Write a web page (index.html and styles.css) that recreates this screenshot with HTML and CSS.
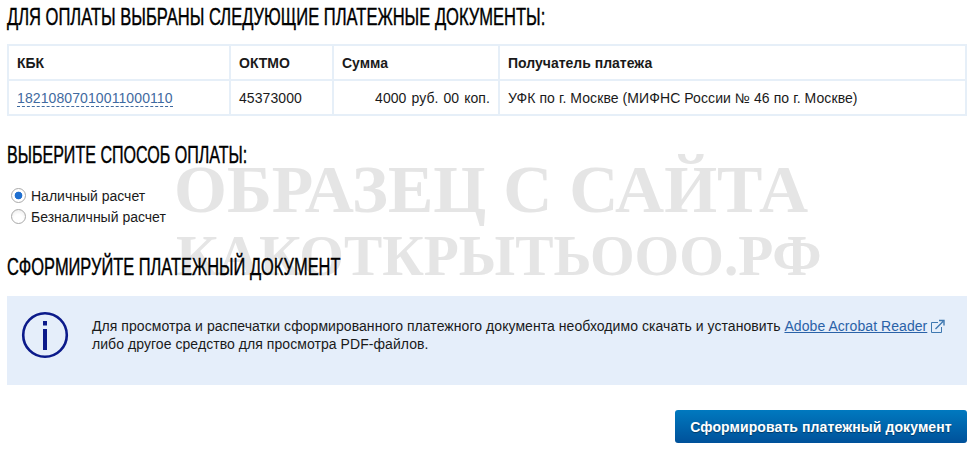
FILE: index.html
```html
<!DOCTYPE html>
<html lang="en">
  <head>
    <meta charset="UTF-8" />
    <title>Оплата</title>
    <link rel="stylesheet" href="styles.css">
  </head>
  <body>
    <div class="watermark">
      <div class="wm-line1">ОБРАЗЕЦ С САЙТА</div>
      <div class="wm-line2">КАКОТКРЫТЬООО.РФ</div>
    </div>
    <div class="page">
      <h2 class="title first"><span>ДЛЯ ОПЛАТЫ ВЫБРАНЫ СЛЕДУЮЩИЕ ПЛАТЕЖНЫЕ ДОКУМЕНТЫ:</span></h2>
      <table class="docs">
        <tr>
          <th class="col-kbk">КБК</th>
          <th class="col-oktmo">ОКТМО</th>
          <th class="col-sum">Сумма</th>
          <th>Получатель платежа</th>
        </tr>
        <tr>
          <td class="code"><a class="dashed" href="#">18210807010011000110</a></td>
          <td>45373000</td>
          <td class="right">4000 руб. 00 коп.</td>
          <td>УФК по г. Москве (МИФНС России № 46 по г. Москве)</td>
        </tr>
      </table>

      <h2 class="title second"><span>ВЫБЕРИТЕ СПОСОБ ОПЛАТЫ:</span></h2>
      <div class="radios">
        <label class="radio"><input type="radio" name="pay" checked>Наличный расчет</label>
        <label class="radio"><input type="radio" name="pay">Безналичный расчет</label>
      </div>

      <h2 class="title third"><span>СФОРМИРУЙТЕ ПЛАТЕЖНЫЙ ДОКУМЕНТ</span></h2>
      <div class="info">
        <svg class="info-icon" viewBox="0 0 48 48" width="48" height="48">
          <circle cx="24" cy="24" r="21.8" fill="none" stroke="#0b1a8a" stroke-width="2.6" />
          <rect x="22" y="10" width="4" height="4.5" fill="#0b1a8a" />
          <rect x="22" y="18" width="4" height="21" fill="#0b1a8a" />
        </svg>
        <p>Для просмотра и распечатки сформированного платежного документа необходимо скачать и установить <a href="#">Adobe Acrobat Reader</a>
          <svg class="ext" viewBox="0 0 14 14" width="14" height="14">
            <path d="M10.5 8v5.5H.5V3.5H7" fill="none" stroke="#3f78b0" stroke-width="1" />
            <path d="M4.5 10L12 2.5M8 1.5h5v5" fill="none" stroke="#3f78b0" stroke-width="1.4" />
          </svg>
          <br>либо другое средство для просмотра PDF-файлов.</p>
      </div>
      <div class="actions">
        <button class="btn" type="button">Сформировать платежный документ</button>
      </div>
    </div>
  </body>
</html>
```

FILE: styles.css
```css
body {
  margin: 0;
  background: #fff;
  color: #1a1a1a;
  font-family: 'Liberation Sans', Arial, sans-serif;
  font-size: 14px;
}
.page {
  position: relative;
  width: 960px;
  margin-left: 7px;
}
.title {
  margin: 0;
  font-weight: normal;
  font-size: 23px;
  line-height: 26px;
  color: #000;
  white-space: nowrap;
}
/* no condensed family here, so squeeze the regular one */
.title span {
  display: inline-block;
  transform-origin: left center;
  -webkit-text-stroke: 0.4px #000;
}
.first {
  padding-top: 4px;
}
.first span {
  transform: scaleX(0.719);
}
.second {
  margin-top: 26px;
}
.second span {
  transform: scaleX(0.698);
}
.third {
  margin-top: 28px;
}
.third span {
  transform: scaleX(0.714);
}
.docs {
  width: 100%;
  margin-top: 14px;
  border-collapse: collapse;
  table-layout: fixed;
  border: 2px solid #e6eff8;
}
.docs th,
.docs td {
  border: 2px solid #e6eff8;
  padding: 0 8px;
  text-align: left;
  white-space: nowrap;
}
.docs th {
  height: 33px;
  font-weight: bold;
}
.docs td {
  height: 33px;
  letter-spacing: 0.08px;
}
.docs .right {
  text-align: right;
  word-spacing: 1px;
}
.col-kbk {
  width: 204px;
}
.col-oktmo {
  width: 85px;
}
.col-sum {
  width: 148px;
}
.dashed {
  color: #3f6aa0;
  text-decoration: none;
  border-bottom: 1px dashed #3f6aa0;
  letter-spacing: 0.1px;
}
.radios {
  margin-top: 18px;
  display: flex;
  flex-direction: column;
  gap: 2px;
}
.radio {
  display: flex;
  align-items: center;
  height: 19px;
  margin-left: 4px;
  gap: 5px;
}
.radio input {
  appearance: none;
  width: 15px;
  height: 15px;
  margin: 0;
  border: 1px solid #a9a9a9;
  border-radius: 50%;
  background: radial-gradient(circle at 50% 70%, #fff 40%, #e8e8e8 100%);
}
.radio input:checked {
  background: radial-gradient(circle, #1f6fd0 0 3.5px, #fff 4.2px);
}
.info {
  display: flex;
  margin-top: 16px;
  height: 89px;
  background: #e5eefa;
}
.info-icon {
  flex: none;
  margin: 15px 0 0 14px;
}
.info p {
  margin: 21px 0 0 23px;
  line-height: 18px;
  white-space: nowrap;
  letter-spacing: 0.06px;
}
.info a {
  color: #2a62a8;
}
.ext {
  vertical-align: -2px;
}
.actions {
  display: flex;
  justify-content: flex-end;
  margin-top: 25px;
}
.btn {
  width: 292px;
  height: 33px;
  border: 0;
  border-radius: 3px;
  background: linear-gradient(#0079bf, #00519a);
  color: #fff;
  font-family: 'Liberation Sans', Arial, sans-serif;
  font-size: 14px;
  font-weight: bold;
  letter-spacing: 0.1px;
  text-shadow: 0 1px 1px rgba(0, 0, 0, 0.4);
}
.watermark {
  position: absolute;
  left: 174px;
  top: 155px;
  color: #e5e5e5;
  font-family: 'Liberation Serif', serif;
  font-weight: bold;
  white-space: nowrap;
}
.wm-line1 {
  font-size: 68px;
  line-height: 68px;
}
.wm-line2 {
  font-size: 57.4px;
  line-height: 66px;
  padding-left: 2px;
}
```
